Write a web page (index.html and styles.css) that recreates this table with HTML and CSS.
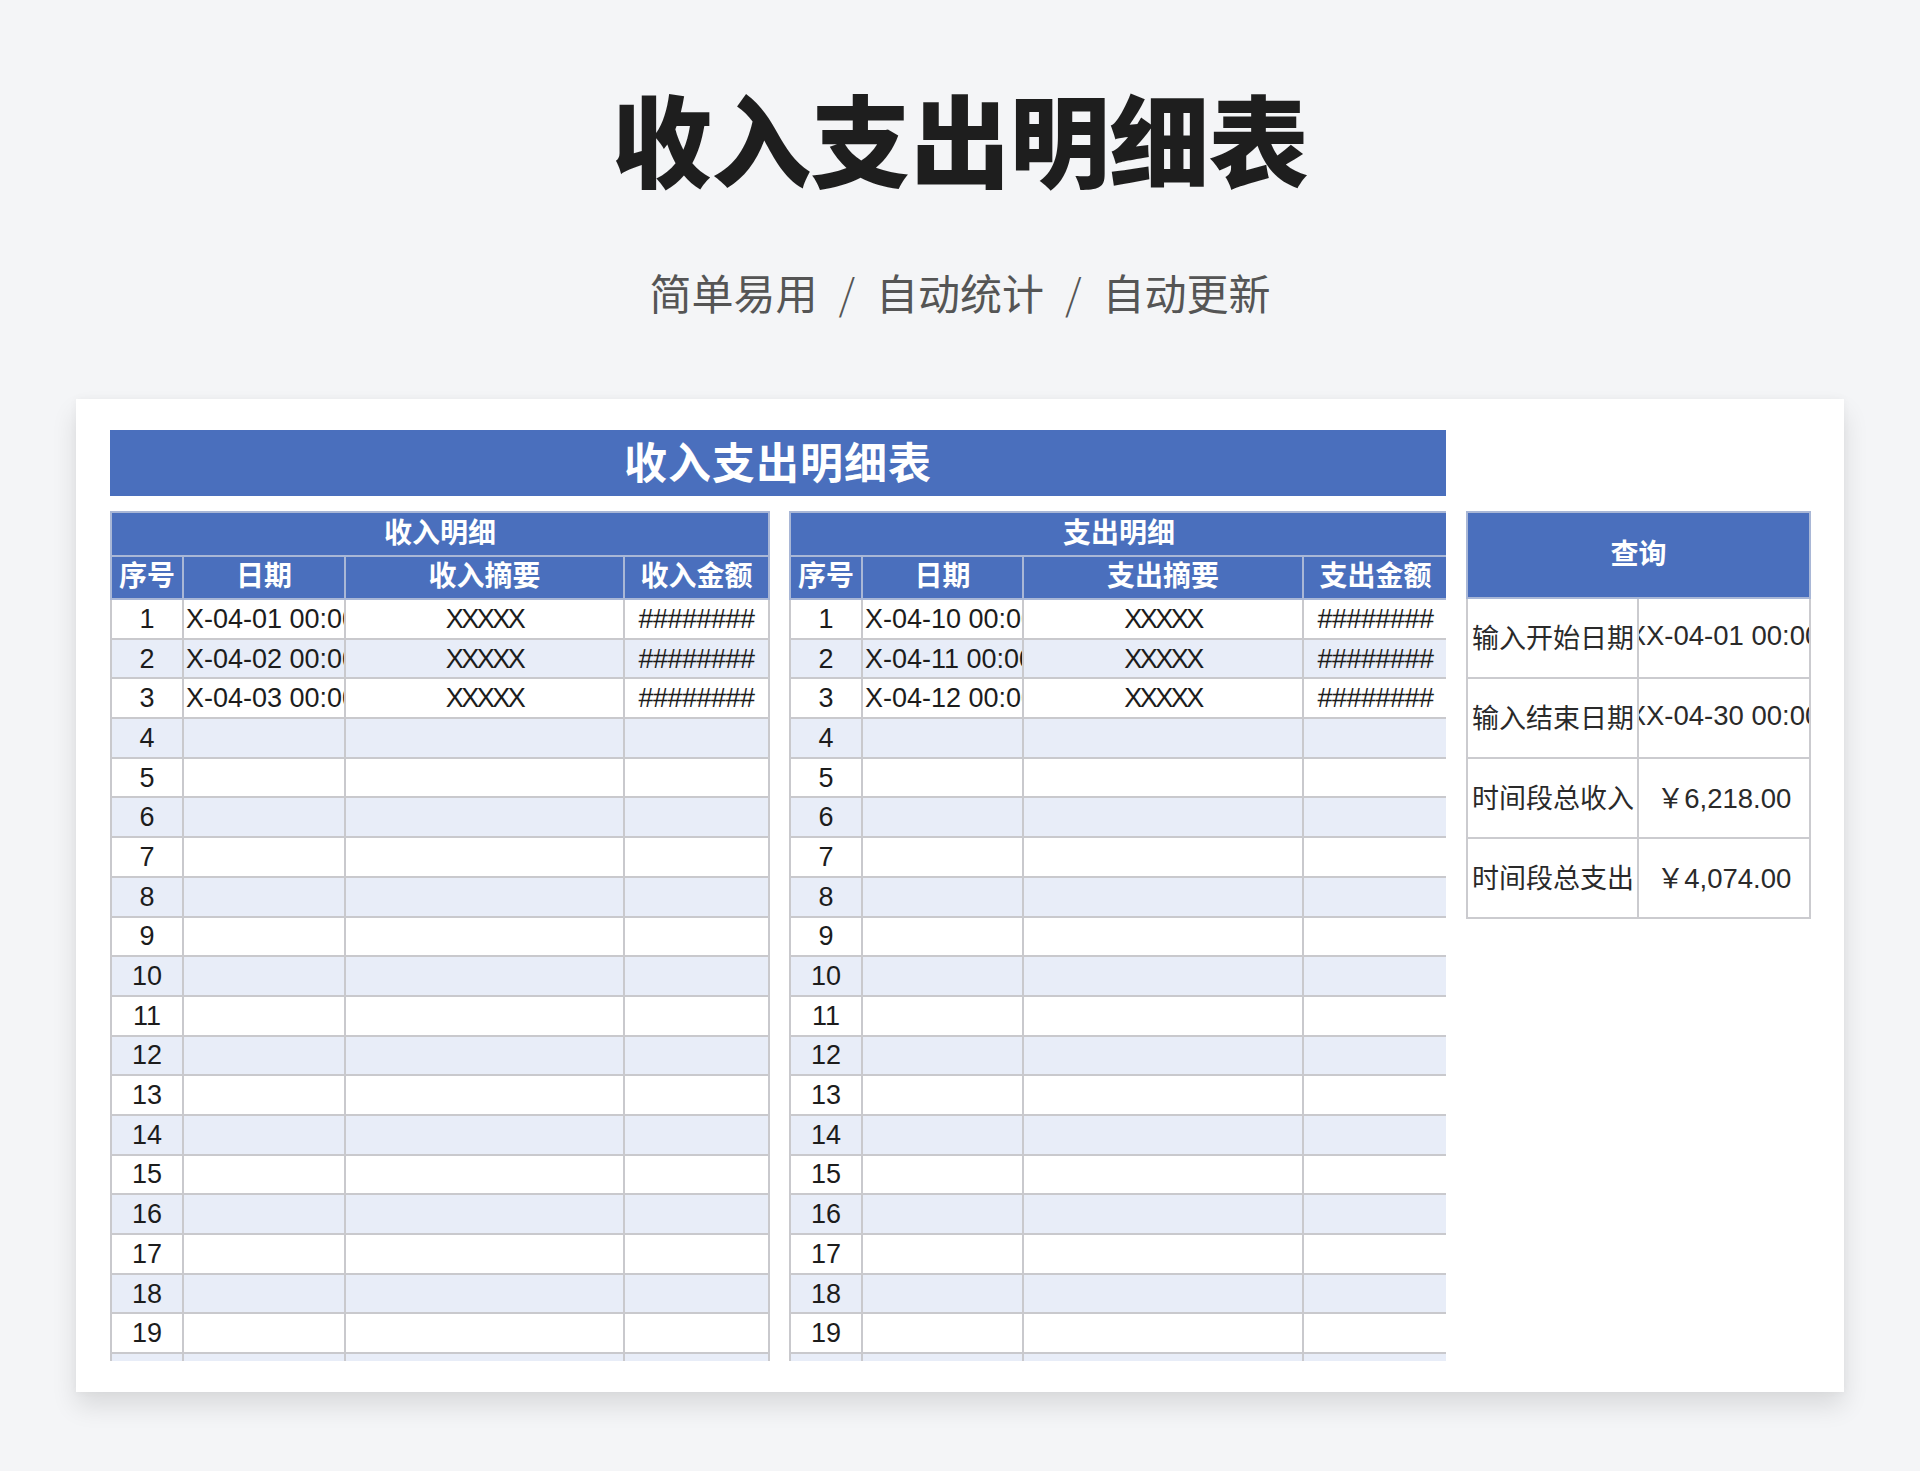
FILE: index.html
```html
<!DOCTYPE html>
<html lang="zh-CN">
<head>
<meta charset="utf-8">
<title>收入支出明细表</title>
<link rel="stylesheet" href="styles.css">
</head>
<body>
<div class="hero">
  <h1 class="title">收入支出明细表</h1>
  <p class="subtitle"><span>简单易用</span><span class="sep">/</span><span>自动统计</span><span class="sep">/</span><span>自动更新</span></p>
</div>
<div class="card">
  <div class="left">
    <div class="banner">收入支出明细表</div>
    <div class="tables">
      <table class="sheet income">
        <colgroup><col class="c-no"><col class="c-date"><col class="c-sum"><col class="c-amt"></colgroup>
        <thead>
          <tr class="r-title"><th colspan="4">收入明细</th></tr>
          <tr class="r-head"><th>序号</th><th>日期</th><th>收入摘要</th><th>收入金额</th></tr>
        </thead>
        <tbody>
          <tr><td class="no">1</td><td class="date">X-04-01 00:00</td><td class="desc">XXXXX</td><td class="amt">########</td></tr>
          <tr><td class="no">2</td><td class="date">X-04-02 00:00</td><td class="desc">XXXXX</td><td class="amt">########</td></tr>
          <tr><td class="no">3</td><td class="date">X-04-03 00:00</td><td class="desc">XXXXX</td><td class="amt">########</td></tr>
          <tr><td class="no">4</td><td></td><td></td><td></td></tr>
          <tr><td class="no">5</td><td></td><td></td><td></td></tr>
          <tr><td class="no">6</td><td></td><td></td><td></td></tr>
          <tr><td class="no">7</td><td></td><td></td><td></td></tr>
          <tr><td class="no">8</td><td></td><td></td><td></td></tr>
          <tr><td class="no">9</td><td></td><td></td><td></td></tr>
          <tr><td class="no">10</td><td></td><td></td><td></td></tr>
          <tr><td class="no">11</td><td></td><td></td><td></td></tr>
          <tr><td class="no">12</td><td></td><td></td><td></td></tr>
          <tr><td class="no">13</td><td></td><td></td><td></td></tr>
          <tr><td class="no">14</td><td></td><td></td><td></td></tr>
          <tr><td class="no">15</td><td></td><td></td><td></td></tr>
          <tr><td class="no">16</td><td></td><td></td><td></td></tr>
          <tr><td class="no">17</td><td></td><td></td><td></td></tr>
          <tr><td class="no">18</td><td></td><td></td><td></td></tr>
          <tr><td class="no">19</td><td></td><td></td><td></td></tr>
          <tr class="partial"><td class="no"></td><td></td><td></td><td></td></tr>
        </tbody>
      </table>
      <table class="sheet expense">
        <colgroup><col class="c-no"><col class="c-date2"><col class="c-sum2"><col class="c-amt2"></colgroup>
        <thead>
          <tr class="r-title"><th colspan="4">支出明细</th></tr>
          <tr class="r-head"><th>序号</th><th>日期</th><th>支出摘要</th><th>支出金额</th></tr>
        </thead>
        <tbody>
          <tr><td class="no">1</td><td class="date">X-04-10 00:00</td><td class="desc">XXXXX</td><td class="amt">########</td></tr>
          <tr><td class="no">2</td><td class="date">X-04-11 00:00</td><td class="desc">XXXXX</td><td class="amt">########</td></tr>
          <tr><td class="no">3</td><td class="date">X-04-12 00:00</td><td class="desc">XXXXX</td><td class="amt">########</td></tr>
          <tr><td class="no">4</td><td></td><td></td><td></td></tr>
          <tr><td class="no">5</td><td></td><td></td><td></td></tr>
          <tr><td class="no">6</td><td></td><td></td><td></td></tr>
          <tr><td class="no">7</td><td></td><td></td><td></td></tr>
          <tr><td class="no">8</td><td></td><td></td><td></td></tr>
          <tr><td class="no">9</td><td></td><td></td><td></td></tr>
          <tr><td class="no">10</td><td></td><td></td><td></td></tr>
          <tr><td class="no">11</td><td></td><td></td><td></td></tr>
          <tr><td class="no">12</td><td></td><td></td><td></td></tr>
          <tr><td class="no">13</td><td></td><td></td><td></td></tr>
          <tr><td class="no">14</td><td></td><td></td><td></td></tr>
          <tr><td class="no">15</td><td></td><td></td><td></td></tr>
          <tr><td class="no">16</td><td></td><td></td><td></td></tr>
          <tr><td class="no">17</td><td></td><td></td><td></td></tr>
          <tr><td class="no">18</td><td></td><td></td><td></td></tr>
          <tr><td class="no">19</td><td></td><td></td><td></td></tr>
          <tr class="partial"><td class="no"></td><td></td><td></td><td></td></tr>
        </tbody>
      </table>
    </div>
  </div>
  <div class="right">
    <table class="query">
      <colgroup><col class="q-label"><col class="q-val"></colgroup>
      <thead><tr><th colspan="2">查询</th></tr></thead>
      <tbody>
        <tr><td class="label">输入开始日期</td><td><div class="val"><span>XX-04-01 00:00</span></div></td></tr>
        <tr><td class="label">输入结束日期</td><td><div class="val"><span>XX-04-30 00:00</span></div></td></tr>
        <tr><td class="label">时间段总收入</td><td><div class="val"><span>￥6,218.00</span></div></td></tr>
        <tr><td class="label">时间段总支出</td><td><div class="val"><span>￥4,074.00</span></div></td></tr>
      </tbody>
    </table>
  </div>
</div>
</body>
</html>
```

FILE: styles.css
```css
html, body {
  margin: 0;
  padding: 0;
}
body {
  background: #f4f5f7;
  font-family: "Liberation Sans", "Noto Sans CJK SC", sans-serif;
  color: #1c1c1c;
  min-height: 1471px;
}
.hero {
  padding-top: 87px;
  text-align: center;
}
.title {
  margin: 0;
  font-family: "Noto Sans CJK SC", sans-serif;
  font-size: 100px;
  line-height: 100px;
  font-weight: 900;
  color: #1e1e1e;
  letter-spacing: -0.5px;
}
.subtitle {
  margin: 84px 0 0;
  font-family: "Noto Sans CJK SC", sans-serif;
  font-size: 42px;
  line-height: 42px;
  font-weight: 400;
  color: #555;
}
.subtitle .sep {
  margin: 0 21px;
  color: #555;
  font-weight: 300;
}
.card {
  margin: 86px 76px 0;
  height: 993px;
  box-sizing: border-box;
  background: #fff;
  box-shadow: 0 14px 24px rgba(0, 0, 0, 0.11), 0 0 8px rgba(0, 0, 0, 0.04);
  padding: 31px 0 0 34px;
  display: flex;
  gap: 20px;
  align-items: flex-start;
}
.left {
  width: 1336px;
}
.banner {
  height: 66px;
  box-sizing: border-box;
  background: #4a6fbd;
  color: #fff;
  font-family: "Noto Sans CJK SC", sans-serif;
  font-weight: 700;
  font-size: 43px;
  line-height: 60px;
  padding-bottom: 6px;
  text-align: center;
  letter-spacing: 1px;
}
.tables {
  margin-top: 15px;
  height: 850px;
  overflow: hidden;
  display: flex;
  gap: 19px;
  align-items: flex-start;
}
.sheet, .query {
  border-collapse: collapse;
  table-layout: fixed;
}
.income { width: 658px; }
.expense { width: 658px; }
.c-no { width: 72px; }
.c-date { width: 162px; }
.c-sum { width: 279px; }
.c-amt { width: 145px; }
.c-date2 { width: 161px; }
.c-sum2 { width: 280px; }
.c-amt2 { width: 145px; }

.sheet th, .query th {
  background: #4a6fbd;
  color: #fff;
  font-family: "Noto Sans CJK SC", sans-serif;
  font-weight: 700;
  font-size: 28px;
  border: 2px solid #a9b7d6;
  padding: 0 0 6px;
  text-align: center;
}
.sheet .r-title th {
  height: 36px;
  line-height: 36px;
}
.sheet .r-head th {
  height: 35px;
  line-height: 35px;
}
.sheet td {
  height: 37.7px;
  border: 2px solid #c9c9cd;
  padding: 0;
  font-size: 27px;
  color: #1c1c1c;
  white-space: nowrap;
  overflow: hidden;
  line-height: 36px;
}
.sheet tbody tr:nth-child(even) td {
  background: #e8edf8;
}
.sheet td.no {
  text-align: center;
}
.sheet td.date {
  text-align: left;
  padding-left: 2px;
  text-overflow: clip;
}
.sheet td.desc {
  text-align: center;
  letter-spacing: -2.5px;
}
.sheet td.amt {
  text-align: center;
  letter-spacing: -0.5px;
}
.right {
  margin-top: 81px;
  width: 343px;
}
.query {
  width: 343px;
}
.q-label { width: 171px; }
.q-val { width: 172px; }
.query th {
  height: 78px;
}
.query td {
  height: 74px;
  border: 2px solid #cbcbcf;
  padding: 0 0 4px;
  background: #fff;
  color: #2a2a2a;
}
.query td.label {
  font-family: "Noto Sans CJK SC", sans-serif;
  font-size: 27px;
  padding-left: 4px;
  white-space: nowrap;
  overflow: hidden;
}
.val {
  display: flex;
  justify-content: center;
  overflow: hidden;
  white-space: nowrap;
  font-size: 27.5px;
}
```
